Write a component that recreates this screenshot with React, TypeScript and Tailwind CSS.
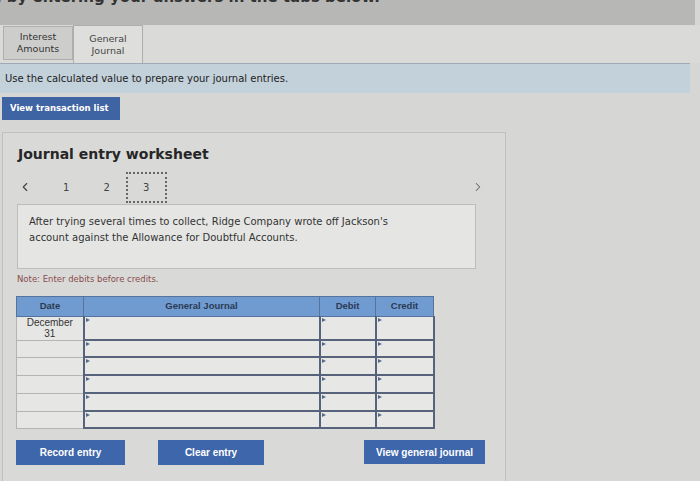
import { ChevronLeft, ChevronRight } from "lucide-react";

const rows = [
  { date: ["December", "31"], h: "h-[24px]" },
  { date: [], h: "h-[17px]" },
  { date: [], h: "h-[18px]" },
  { date: [], h: "h-[18px]" },
  { date: [], h: "h-[18px]" },
  { date: [], h: "h-[17px]" },
];

function InputCell() {
  return (
    <td className="p-0 border-x-2 border-b-2 border-[#56637a] bg-[#e7e8e6] relative">
      <span className="absolute left-[1px] top-[1px] h-0 w-0 border-y-[2px] border-l-[4px] border-y-transparent border-l-[#55688a]" />
    </td>
  );
}

export default function App() {
  return (
    <div
      className="w-[700px] h-[481px] overflow-hidden bg-[#d6d7d4] text-[#222]"
      style={{ fontFamily: '"DejaVu Sans", Verdana, sans-serif' }}
    >
      {/* top instructions band, mostly scrolled off */}
      <div className="h-[25px] bg-[#b7b7b5] mr-[5px] relative overflow-hidden">
        <div className="absolute right-[315px] top-[-14px] whitespace-nowrap text-[15px] font-bold text-[#333]">
          Complete this question by entering your answers in the tabs below.
        </div>
      </div>

      {/* tabs */}
      <div className="flex items-end h-[38px] pl-[3px] bg-[#dadbd8]">
        <div className="w-[70px] h-[34px] mb-[3px] bg-[#cdcecb] border border-[#aeaeac] flex items-center justify-center text-center text-[9.5px] leading-[12px] text-[#333]">
          Interest
          <br />
          Amounts
        </div>
        <div className="w-[70px] h-[38px] bg-[#dedfdc] border border-b-0 border-[#aeaeac] flex items-center justify-center text-center text-[9.5px] leading-[12px] text-[#444]">
          General
          <br />
          Journal
        </div>
      </div>

      <div className="h-[30px] mr-[10px] bg-[#c3d1db] border-t border-[#9eabb6] flex items-center pl-[5px] text-[10px] text-[#222]">
        Use the calculated value to prepare your journal entries.
      </div>

      <div className="pl-[2px] pt-[4px]">
        <button className="w-[118px] h-[23px] bg-[#3f64a3] text-white text-[8.5px] font-bold flex items-center pl-[8px]">
          View transaction list
        </button>
      </div>

      {/* worksheet panel */}
      <div className="mt-[12px] ml-[2px] w-[504px] h-[360px] bg-[#d9dad8] border border-[#c0c1bf] pl-[13px] pt-[12px]">
        <h2 className="text-[14px] font-bold text-[#262626] leading-[18px] pl-[2px]">Journal entry worksheet</h2>

        <div className="flex items-center h-[32px] mt-[8px] text-[10px] text-[#444]">
          <ChevronLeft className="w-[14px] h-[14px] ml-[2px] text-[#444]" strokeWidth={2} />
          <span className="ml-[31px]">1</span>
          <span className="ml-[34px]">2</span>
          <span className="ml-[16px] w-[41px] h-[31px] border-2 border-dotted border-[#666] flex items-center justify-center">
            3
          </span>
          <ChevronRight className="w-[14px] h-[14px] ml-auto mr-[20px] text-[#666]" strokeWidth={1.75} />
        </div>

        <div className="w-[459px] h-[65px] mt-[1px] ml-[1px] bg-[#e5e6e4] border border-[#bdbebc] pl-[11px] pt-[9px] text-[10px] leading-[16px] text-[#333]">
          After trying several times to collect, Ridge Company wrote off Jackson's
          <br />
          account against the Allowance for Doubtful Accounts.
        </div>

        <div className="mt-[4px] ml-[1px] text-[8.5px] text-[#8a4c4c]">Note: Enter debits before credits.</div>

        <table
          className="mt-[10px] border-collapse table-fixed w-[417px]"
          style={{ fontFamily: '"Liberation Sans", Arial, sans-serif' }}
        >
          <colgroup>
            <col className="w-[67px]" />
            <col className="w-[236px]" />
            <col className="w-[56px]" />
            <col className="w-[58px]" />
          </colgroup>
          <thead>
            <tr className="h-[20px] bg-[#6f9bd1] text-[9.5px] font-bold text-[#2c3a52]">
              <th className="border border-[#56739e]">Date</th>
              <th className="border border-[#56739e]">General Journal</th>
              <th className="border border-[#56739e]">Debit</th>
              <th className="border border-[#56739e]">Credit</th>
            </tr>
          </thead>
          <tbody>
            {rows.map((r, i) => (
              <tr key={i} className={r.h}>
                <td className="p-0 border border-[#b4b5b3] bg-[#e6e7e5] text-center text-[10px] leading-[11px] text-[#333] align-middle">
                  {r.date.map((d) => (
                    <div key={d}>{d}</div>
                  ))}
                </td>
                <InputCell />
                <InputCell />
                <InputCell />
              </tr>
            ))}
          </tbody>
        </table>

        <div
          className="flex mt-[11px] text-[10px] font-bold text-white"
          style={{ fontFamily: '"Liberation Sans", Arial, sans-serif' }}
        >
          <button className="w-[109px] h-[25px] bg-[#3e66ab]">Record entry</button>
          <button className="ml-[33px] w-[106px] h-[25px] bg-[#3e66ab]">Clear entry</button>
          <button className="ml-[100px] w-[121px] h-[24px] bg-[#3e66ab]">View general journal</button>
        </div>
      </div>
    </div>
  );
}
